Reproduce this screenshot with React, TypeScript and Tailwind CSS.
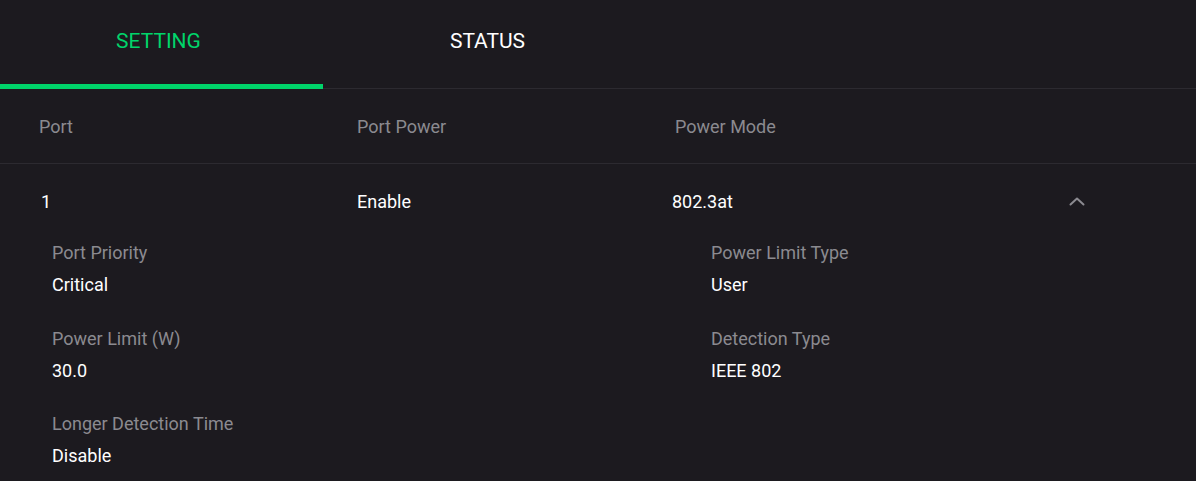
import React from 'react';

const details = [
  [
    { label: 'Port Priority', value: 'Critical' },
    { label: 'Power Limit Type', value: 'User' },
  ],
  [
    { label: 'Power Limit (W)', value: '30.0' },
    { label: 'Detection Type', value: 'IEEE 802' },
  ],
  [{ label: 'Longer Detection Time', value: 'Disable' }],
];

function ChevronUp() {
  return (
    <svg width="20" height="20" viewBox="0 0 20 20" fill="none">
      <path d="M3.5 12.5 10 6.5l6.5 6" stroke="#8b8a90" strokeWidth="2" strokeLinecap="round" strokeLinejoin="round" />
    </svg>
  );
}

export default function App() {
  return (
    <div className="w-[1196px] h-[481px] overflow-hidden bg-[#1c1a1f] font-['Roboto',sans-serif] text-white">
      {/* Tabs */}
      <div className="flex h-[89px] border-b border-[#2c2a30]">
        <div className="relative w-[323px] flex items-center justify-center pb-[5px] pr-[6px]">
          <span className="text-[21px] text-[#00d46a]">SETTING</span>
          <div className="absolute left-0 right-0 -bottom-[1px] h-[5px] bg-[#00d46a]" />
        </div>
        <div className="w-[329px] flex items-center justify-center pb-[5px]">
          <span className="text-[21px] text-white">STATUS</span>
        </div>
      </div>

      {/* Table header */}
      <div className="flex h-[75px] items-center border-b border-[#2c2a30] text-[18px] text-[#8b8a90]">
        <div className="w-[357px] shrink-0 pl-[39px]">Port</div>
        <div className="w-[318px] shrink-0">Port Power</div>
        <div className="flex-1">Power Mode</div>
      </div>

      {/* Row */}
      <div className="flex h-[74px] items-center text-[18px]">
        <div className="w-[357px] shrink-0 pl-[41px]">1</div>
        <div className="w-[315px] shrink-0">Enable</div>
        <div className="w-[395px] shrink-0">802.3at</div>
        <div className="pt-[2px]">
          <ChevronUp />
        </div>
      </div>

      {/* Details */}
      <div className="flex flex-col pl-[52px] pt-[1px]">
        {details.map((row, i) => (
          <div key={i} className={`flex ${i === 1 ? 'mt-[26px]' : i === 2 ? 'mt-[25px]' : ''}`}>
            {row.map((d) => (
              <div key={d.label} className="w-[659px] shrink-0 flex flex-col gap-[4px]">
                <div className="text-[18px] leading-[28px] text-[#8b8a90]">{d.label}</div>
                <div className="text-[18px] leading-[28px] text-white">{d.value}</div>
              </div>
            ))}
          </div>
        ))}
      </div>
    </div>
  );
}
